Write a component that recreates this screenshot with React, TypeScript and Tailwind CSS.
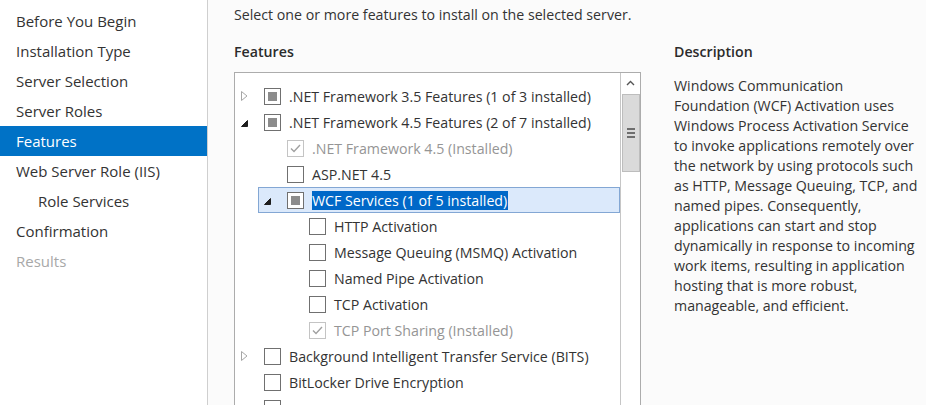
import React from 'react';

type Node = {
  label: string;
  indent: string;
  expander?: 'open' | 'closed';
  state: 'partial' | 'empty' | 'checked';
  disabled?: boolean;
  selected?: boolean;
};

const navItems = [
  { label: 'Before You Begin' },
  { label: 'Installation Type' },
  { label: 'Server Selection' },
  { label: 'Server Roles' },
  { label: 'Features', active: true },
  { label: 'Web Server Role (IIS)' },
  { label: 'Role Services', sub: true },
  { label: 'Confirmation' },
  { label: 'Results', muted: true },
];

const nodes: Node[] = [
  { label: '.NET Framework 3.5 Features (1 of 3 installed)', indent: 'pl-0', expander: 'closed', state: 'partial' },
  { label: '.NET Framework 4.5 Features (2 of 7 installed)', indent: 'pl-0', expander: 'open', state: 'partial' },
  { label: '.NET Framework 4.5 (Installed)', indent: 'pl-[23px]', state: 'checked', disabled: true },
  { label: 'ASP.NET 4.5', indent: 'pl-[23px]', state: 'empty' },
  { label: 'WCF Services (1 of 5 installed)', indent: 'pl-[23px]', expander: 'open', state: 'partial', selected: true },
  { label: 'HTTP Activation', indent: 'pl-[45px]', state: 'empty' },
  { label: 'Message Queuing (MSMQ) Activation', indent: 'pl-[45px]', state: 'empty' },
  { label: 'Named Pipe Activation', indent: 'pl-[45px]', state: 'empty' },
  { label: 'TCP Activation', indent: 'pl-[45px]', state: 'empty' },
  { label: 'TCP Port Sharing (Installed)', indent: 'pl-[45px]', state: 'checked', disabled: true },
  { label: 'Background Intelligent Transfer Service (BITS)', indent: 'pl-0', expander: 'closed', state: 'empty' },
  { label: 'BitLocker Drive Encryption', indent: 'pl-0', state: 'empty' },
  // next row is scrolled past the bottom edge, only the box top shows
  { label: '', indent: 'pl-0', state: 'empty' },
];

const descLines = [
  'Windows Communication',
  'Foundation (WCF) Activation uses',
  'Windows Process Activation Service',
  'to invoke applications remotely over',
  'the network by using protocols such',
  'as HTTP, Message Queuing, TCP, and',
  'named pipes. Consequently,',
  'applications can start and stop',
  'dynamically in response to incoming',
  'work items, resulting in application',
  'hosting that is more robust,',
  'manageable, and efficient.',
];

function Expander({ kind }: { kind?: 'open' | 'closed' }) {
  return (
    <div className="w-[16px] h-[16px] flex items-center justify-center shrink-0">
      {kind === 'closed' && (
        <svg width="7" height="10" viewBox="0 0 7 10">
          <path d="M0.5 0.5 L6 5 L0.5 9.5 Z" fill="none" stroke="#a6a6a6" strokeWidth="1" />
        </svg>
      )}
      {kind === 'open' && (
        <svg width="7" height="7" viewBox="0 0 7 7" className="mt-[2px]">
          <path d="M6.5 0.5 L6.5 6.5 L0.5 6.5 Z" fill="#1e1e1e" stroke="#1e1e1e" strokeWidth="1" strokeLinejoin="round" />
        </svg>
      )}
    </div>
  );
}

function Checkbox({ state, disabled }: { state: Node['state']; disabled?: boolean }) {
  return (
    <div
      className={`w-[17px] h-[17px] border flex items-center justify-center shrink-0 bg-white ${
        disabled ? 'border-[#c4c4c4]' : 'border-[#707070]'
      }`}
    >
      {state === 'partial' && <div className="w-[9px] h-[9px] bg-[#8c8c8c]" />}
      {state === 'checked' && (
        <svg width="11" height="9" viewBox="0 0 11 9">
          <path d="M1 4.5 L4 7.5 L10 1" fill="none" stroke="#a0a0a0" strokeWidth="1.4" />
        </svg>
      )}
    </div>
  );
}

export default function App() {
  return (
    <div
      className="flex w-[926px] h-[405px] overflow-hidden bg-[#fbfbfb] text-[#333333]"
      style={{ fontFamily: '"Segoe UI", "Open Sans", "Noto Sans", sans-serif' }}
    >
      {/* Wizard steps */}
      <nav className="w-[208px] shrink-0 bg-white border-r border-[#cfcfcf] pt-[6px] text-[15px]">
        {navItems.map((item) => (
          <div
            key={item.label}
            className={`h-[30px] flex items-center ${item.sub ? 'pl-[38px]' : 'pl-[16px]'} ${
              item.active ? 'bg-[#0072c6] text-white' : item.muted ? 'text-[#a8a8a8]' : 'text-[#333333]'
            }`}
          >
            {item.label}
          </div>
        ))}
      </nav>

      {/* Main */}
      <div className="flex-1 flex flex-col pl-[26px] pt-[4px] text-[14.2px]">
        <div className="h-[33px] flex items-center">
          Select one or more features to install on the selected server.
        </div>

        <div className="flex gap-[33px] mt-[16px]">
          {/* Features tree */}
          <div className="w-[407px] shrink-0">
            <div className="h-[20px] flex items-center font-semibold text-[#2b2b2b]">Features</div>
            <div className="mt-[11px] h-[400px] border border-[#acacac] bg-white flex">
              <div className="flex-1 pt-[10px]">
                {nodes.map((n, i) => (
                  <div key={i} className={`${n.indent} h-[26px]`}>
                    <div
                      className={`h-[26px] flex items-center ${
                        n.selected ? 'bg-[#dbe9fb] border border-[#83a7d4]' : 'border border-transparent'
                      }`}
                    >
                      <Expander kind={n.expander} />
                      <div className="ml-[12px]">
                        <Checkbox state={n.state} disabled={n.disabled} />
                      </div>
                      {n.label && (
                        <span
                          className={`ml-[8px] whitespace-nowrap leading-[19px] ${
                            n.selected
                              ? 'bg-[#0068c8] text-white pr-[1px]'
                              : n.disabled
                              ? 'text-[#959595]'
                              : 'text-[#333333]'
                          }`}
                        >
                          {n.label}
                        </span>
                      )}
                    </div>
                  </div>
                ))}
              </div>

              {/* Scrollbar */}
              <div className="w-[20px] shrink-0 border-l border-[#c6c6c6] flex flex-col items-center">
                <div className="h-[20px] w-full flex items-center justify-center">
                  <svg width="9" height="6" viewBox="0 0 9 6">
                    <path d="M1 5 L4.5 1.5 L8 5" fill="none" stroke="#555555" strokeWidth="1.4" />
                  </svg>
                </div>
                <div className="mt-[1px] w-[18px] h-[78px] bg-[#dadada] border border-[#bdbdbd] flex flex-col items-center justify-center gap-[2px]">
                  <div className="w-[8px] h-[2px] bg-[#6e6e6e]" />
                  <div className="w-[8px] h-[2px] bg-[#6e6e6e]" />
                  <div className="w-[8px] h-[2px] bg-[#6e6e6e]" />
                </div>
              </div>
            </div>
          </div>

          {/* Description */}
          <div className="flex-1">
            <div className="h-[20px] flex items-center font-semibold text-[#2b2b2b]">Description</div>
            <div className="mt-[15px] leading-[20px]">
              {descLines.map((l) => (
                <div key={l} className="whitespace-nowrap">
                  {l}
                </div>
              ))}
            </div>
          </div>
        </div>
      </div>
    </div>
  );
}
